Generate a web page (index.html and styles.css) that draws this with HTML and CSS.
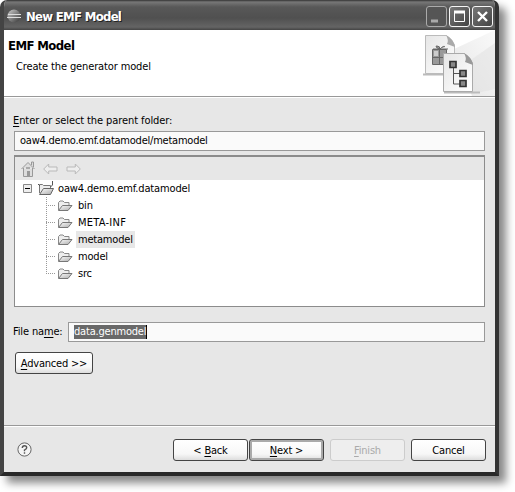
FILE: index.html
```
<!DOCTYPE html>
<html lang="en">
<head>
<meta charset="utf-8">
<title>New EMF Model</title>
<link rel="stylesheet" href="styles.css">
</head>
<body>
<svg class="defs" width="0" height="0">
  <defs>
    <linearGradient id="fold" x1="0" y1="0" x2="1" y2="1"><stop offset="0" stop-color="#fff"/><stop offset="1" stop-color="#aaa"/></linearGradient>
    <linearGradient id="ball" x1="0" y1="0" x2="1" y2="1"><stop offset="0" stop-color="#ccc"/><stop offset="1" stop-color="#353535"/></linearGradient>
    <linearGradient id="paper" x1="0" y1="0" x2="1" y2="1"><stop offset="0" stop-color="#e6e6e6"/><stop offset="1" stop-color="#fff"/></linearGradient>
    <linearGradient id="ray" x1="0" y1="1" x2="1" y2="0"><stop offset="0" stop-color="#ccc"/><stop offset="1" stop-color="#f4f4f4"/></linearGradient>
    <symbol id="folder" viewBox="0 0 16 14">
      <path d="M1.500 11V3.500l1.500-1.500h3l1.500 1.500h4.500v3" fill="#eee" stroke="#888"/>
      <path d="M1.500 11.500l4-5h9.500l-4 5z" fill="url(#fold)" stroke="#777"/>
    </symbol>
  </defs>
</svg>
<div class="window">
  <header class="titlebar">
    <svg class="logo" width="15" height="15" viewBox="0 0 15 15"><circle cx="7" cy="7" r="6.500" fill="url(#ball)"/><path d="M1 5.500h13M0 8.500h14" stroke="#ddd"/></svg>
    <span class="caption">New EMF Model</span>
    <div class="controls">
      <span class="control min"><svg width="19" height="19"><path d="M4 14h7" stroke="#aaa" stroke-width="3"/></svg></span>
      <span class="control"><svg width="19" height="19"><path d="M4.500 4v10.500h10V4" fill="none" stroke="#fff"/><path d="M4 5h11" stroke="#fff" stroke-width="3"/></svg></span>
      <span class="control"><svg width="19" height="19"><path d="M5 5l9 9M14 5l-9 9" stroke="#fff" stroke-width="2.400"/></svg></span>
    </div>
  </header>
  <section class="banner">
    <div><h1>EMF Model</h1><p>Create the generator model</p></div>
    <svg width="75" height="66" viewBox="0 0 75 66">
      <path d="M32 20L75 0v66H52z" fill="url(#ray)" opacity=".5"/>
      <path d="M48 32L75 13v46L52 64z" fill="#ddd" opacity=".45"/>
      <path d="M3 44.500h22M24 62.500h36" stroke="#bbb" stroke-width="2"/>
      <path d="M5.500 5.500h21l8 9v29h-29z" fill="url(#paper)" stroke="#bbb"/>
      <path d="M26 5q3 5 1 9l8 3q-1-8-9-12z" fill="#aaa"/>
      <path d="M12.500 19.500h14v15h-14zM12 27.500h15M19.500 17v18M13 19l15 0M19 19q-5-3-2-3t3 3q4-4 5-2" fill="#999" stroke="#666"/>
      <path d="M14 21h4v5h-4z" fill="#ccc"/>
      <path d="M23.500 23.500h21l8 9v29h-29z" fill="url(#paper)" stroke="#aaa"/>
      <path d="M44 23q3 5 1 9l8 3q-1-8-9-12z" fill="#999"/>
      <path d="M33.500 38v16H41M33.500 43.500H41" fill="none" stroke="#555"/>
      <path d="M30 31.500h6v6h-6zM40 40.500h6v6h-6zM40 50.500h6v6h-6z" fill="#888" stroke="#333" stroke-width="1.700"/>
    </svg>
  </section>
  <main>
    <label class="prompt"><u>E</u>nter or select the parent folder:</label>
    <div class="field path">oaw4.demo.emf.datamodel/metamodel</div>
    <div class="browser">
      <div class="tools">
        <svg width="14" height="16" viewBox="0 0 14 16"><path d="M2.500 7v8.500h9V7M.5 8L7 1.500 13.500 8M10.500 4V1h2v5" fill="#ddd" stroke="#999"/><path d="M6 10h3v5H6z" fill="#999"/><path d="M5 6h4v2H5z" fill="#aaa"/></svg>
        <svg width="15" height="12" viewBox="0 0 15 12"><path d="M.7 6l5-5v3H14v4H5.700v3z" fill="#eee" stroke="#b9b9b9"/></svg>
        <svg width="15" height="12" viewBox="0 0 15 12"><path d="M14.300 6l-5-5v3H1v4h8.300v3z" fill="#eee" stroke="#b9b9b9"/></svg>
      </div>
      <div class="row root">
        <svg class="toggle" width="9" height="9"><path d="M.5.5h8v8h-8z" fill="#eee" stroke="#888"/><path d="M2 4.500h5" stroke="#000"/></svg>
        <svg width="18" height="16" viewBox="0 0 18 16"><path d="M2.500 12V3.500h3l1 1h7V8" fill="#eee" stroke="#777"/><path d="M2.500 13.500l4-6h10l-3 6z" fill="url(#fold)" stroke="#666"/><path d="M1 3l2 2M15.500 0v4l-2 2" fill="none" stroke="#555"/></svg>
        <span>oaw4.demo.emf.datamodel</span>
      </div>
      <div class="children">
        <div class="row"><svg width="16" height="14"><use href="#folder"/></svg><span>bin</span></div>
        <div class="row"><svg width="16" height="14"><use href="#folder"/></svg><span class="caps">META-INF</span></div>
        <div class="row"><svg width="16" height="14"><use href="#folder"/></svg><span class="chosen">metamodel</span></div>
        <div class="row"><svg width="16" height="14"><use href="#folder"/></svg><span>model</span></div>
        <div class="row"><svg width="16" height="14"><use href="#folder"/></svg><span>src</span></div>
      </div>
    </div>
    <div class="filename"><label>File na<u>m</u>e:</label><div class="field"><span class="marked">data.genmodel</span></div></div>
    <button class="advanced"><u>A</u>dvanced &gt;&gt;</button>
  </main>
  <footer>
    <svg class="help" width="15" height="15" viewBox="0 0 15 15"><circle cx="7.500" cy="7.500" r="6.600" fill="#f5f5f5" stroke="#666"/><path d="M5.300 6q0-2.300 2.200-2.300T9.700 5.700Q9.700 6.700 7.500 8v1.200M7.500 10.200v1.600" fill="none" stroke="#555" stroke-width="1.400"/></svg>
    <button>&lt; <u>B</u>ack</button>
    <button class="default"><u>N</u>ext &gt;</button>
    <button class="finish" disabled><u>F</u>inish</button>
    <button>Cancel</button>
  </footer>
</div>
</body>
</html>
```
FILE: styles.css
```
* { box-sizing: border-box; }
body { margin: 0; width: 515px; height: 492px; overflow: hidden; background: #fff; font: 11px/17px "DejaVu Sans Condensed", "DejaVu Sans", sans-serif; font-stretch: condensed; letter-spacing: -.2px; color: #000; white-space: nowrap; }
.defs { position: absolute; }
svg { display: block; flex: none; }
u { text-underline-offset: 2px; text-decoration-thickness: 1px; }
.window { width: 499px; height: 476px; display: flex; flex-direction: column; border: solid #333; border-width: 0 4px 4px; border-color: #333 #333 #292929 #444; border-radius: 7px 7px 0 0; background: #e7e7e7; box-shadow: 7px 7px 9px 0 #888; overflow: hidden; }
.titlebar { height: 30px; flex: none; display: flex; align-items: center; margin: 0 -4px; padding: 3px 6px 0 7px; background: linear-gradient(#333 0, #777 2px, #585858 7px, #505050 18px, #646464 27px, #444); }
.caption { margin-left: 4px; font-size: 13px; font-weight: bold; letter-spacing: -.7px; color: #fff; text-shadow: 1px 1px #222; }
.controls { display: flex; gap: 2px; margin-left: auto; }
.control { width: 21px; height: 21px; border: 1px solid #f5f5f5; border-radius: 3px; background: linear-gradient(135deg, #777, #444); }
.min { border-color: #aaa; background: #555; }
.banner { height: 67px; flex: none; display: flex; justify-content: space-between; padding-left: 4px; background: #fff; border-bottom: 1px solid #999; }
h1 { margin: 7px 0 0; font-size: 13px; line-height: 17px; letter-spacing: -.6px; }
p { margin: 4px 0 0 8px; letter-spacing: -.13px; }
main { flex: 1; padding: 14px 10px 0 9px; border-top: 1px solid #fff; }
.prompt { display: block; height: 19px; letter-spacing: -.09px; }
.field { height: 20px; padding: 0 5px; border: 1px solid #999; background: #fafafa; line-height: 18px; }
.path, .browser { margin-left: 1px; }
.path { letter-spacing: -.23px; }
.browser { height: 152px; margin-top: 4px; border: 1px solid #8c8c8c; border-top-width: 2px; background: #fff; }
.tools { height: 23px; display: flex; align-items: center; gap: 8px; padding-left: 6px; background: #e7e7e7; }
.row { height: 17px; display: flex; align-items: center; }
.root { padding-left: 8px; gap: 5px; letter-spacing: -.14px; }
.root span { margin-left: -2px; }
.children { margin-left: 31px; background: repeating-linear-gradient(#999 0 1px, transparent 1px 2px) 0 0 / 1px 77px no-repeat; }
.children .row { gap: 2px; }
.children .row::before { content: ""; width: 9px; height: 1px; background: repeating-linear-gradient(90deg, #999 0 1px, transparent 1px 2px); }
.children .row span { margin-left: 1px; padding: 0 2px; }
.children .row .chosen { width: 59px; background: #e7e7e7; }
.children .row .caps { letter-spacing: .25px; }
.filename { display: flex; margin: 15px 0 0; }
.filename label { width: 54px; line-height: 20px; letter-spacing: -.15px; }
.filename .field { flex: 1; margin-left: 1px; padding-top: 2px; }
.marked { display: block; width: 73px; height: 14px; line-height: 13px; background: #696969; color: #fff; border-right: 1px solid #000; }
button { display: block; width: 75px; height: 22px; flex: none; padding: 0; border: 1px solid #444; border-radius: 3px; background: linear-gradient(#fff, #f7f7f7 70%, #ddd); font: inherit; letter-spacing: inherit; color: #000; }
.advanced { width: 78px; margin: 10px 0 0 2px; }
footer { height: 47px; flex: none; display: flex; padding: 13px 9px 0 13px; border-top: 1px solid #999; box-shadow: inset 0 1px #fff; }
.help { margin: 3px auto 0 0; }
.default { margin-left: 1px; box-shadow: inset 0 0 0 2px #aaa; }
.finish { margin: 0 6px; border-color: #ccc; background: #eee; color: #aaa; }
```
